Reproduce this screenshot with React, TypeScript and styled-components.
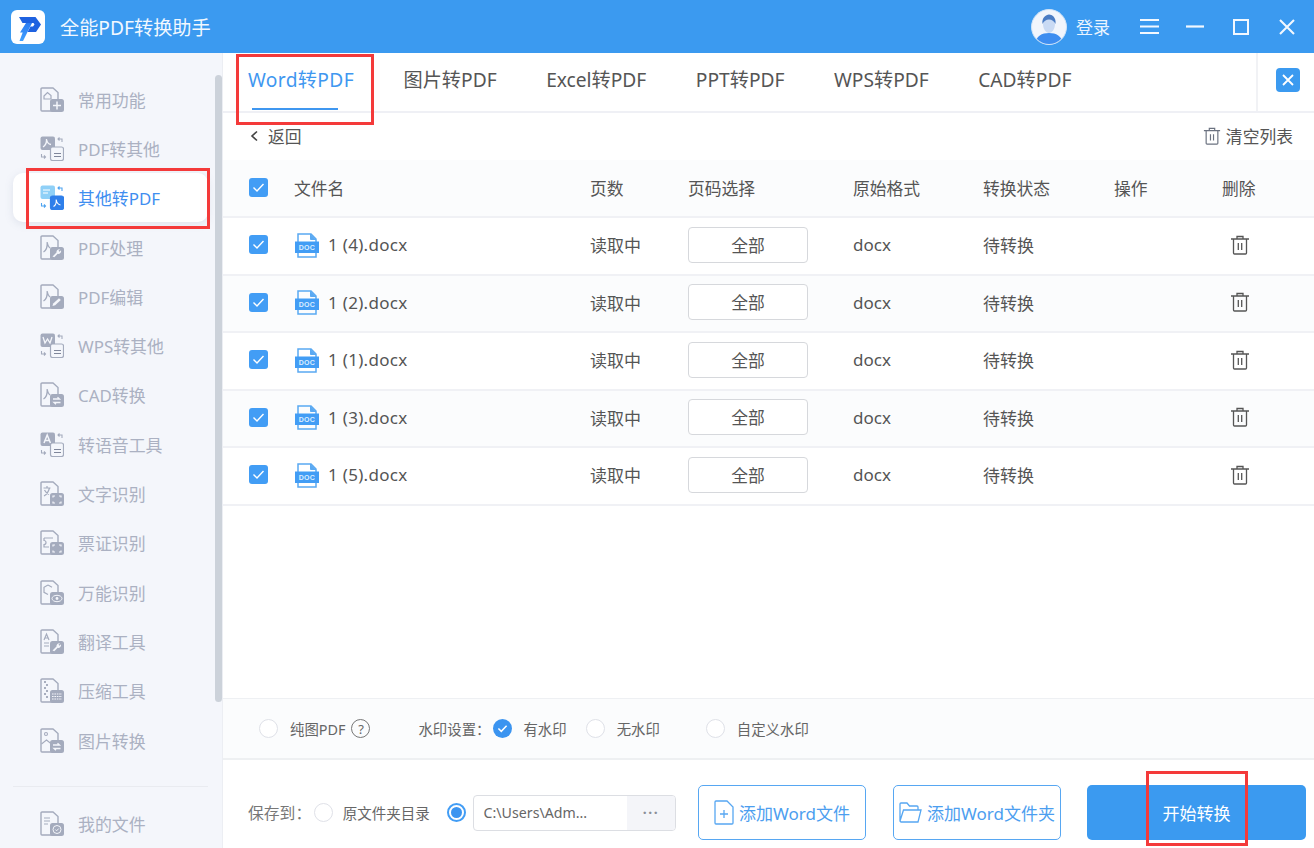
import React from "react";
import styled, { createGlobalStyle } from "styled-components";

const Global = createGlobalStyle`
  html, body { margin: 0; padding: 0; height: 100%; }
  body { font-family: "Noto Sans", "Noto Sans CJK SC", "Liberation Sans", sans-serif; color: #555; overflow: hidden; }
  * { box-sizing: border-box; }
`;

const Shell = styled.div`position: relative; width: 1314px; height: 848px; display: flex; flex-direction: column; overflow: hidden; background: #fff;`;
const Header = styled.header`height: 53px; flex: none; background: #3b9af0; display: flex; align-items: center; padding-left: 11px; color: #fff;`;
const Logo = styled.div`width: 34px; height: 34px; border-radius: 6px; background: #fff; display: flex;`;
const Title = styled.div`margin-left: 15px; font-size: 19.2px; color: #f2f8ff; white-space: nowrap; flex: 1;`;
const Avatar = styled.div`width: 36px; height: 36px; border-radius: 50%; overflow: hidden; background: #f1f5fc; border: 1px solid #cfe3f8;`;
const Login = styled.div`margin-left: 9px; font-size: 17px; width: 35px; white-space: nowrap; color: #eaf4ff;`;
const WinBtn = styled.div<{ $ml: number }>`margin-left: ${p => p.$ml}px; display: flex; align-items: center;`;
const Body = styled.div`flex: 1; min-height: 0; display: flex;`;

const Side = styled.aside`position: relative; width: 223px; flex: none; background: #f4f6fb; border-right: 1px solid #eceef3; padding-top: 21.5px; display: flex; flex-direction: column;`;
const SideItem = styled.div<{ $active?: boolean }>`
  height: 49.3px; flex: none; margin: 0 14px 0 13px; padding-left: 27px; display: flex; align-items: center; gap: 14px;
  font-size: 16.9px; white-space: nowrap; color: ${p => (p.$active ? "#3f8ef0" : "#abb1c2")};
  background: ${p => (p.$active ? "#fff" : "transparent")};
  border-radius: ${p => (p.$active ? "10px" : "0")};
  box-shadow: ${p => (p.$active ? "0 2px 8px rgba(120,130,160,.16)" : "none")};
`;
const SideRule = styled.div`height: 1px; margin: 21px 14px 12px 13px; background: #e9ebf0; flex: none;`;
const Thumb = styled.div`position: absolute; left: 215px; top: 22px; width: 7px; height: 627px; border-radius: 4px; background: #ccd2da;`;

const Main = styled.main`flex: 1; min-width: 0; display: flex; flex-direction: column;`;
const Tabs = styled.nav`height: 60px; flex: none; display: flex; border-bottom: 2px solid #eff0f5; padding-left: 25px;`;
const TabList = styled.div`flex: 1; display: flex; gap: 49.5px;`;
const Tab = styled.div<{ $active?: boolean }>`
  position: relative; height: 58px; line-height: 53px; font-size: 19.2px; white-space: nowrap;
  color: ${p => (p.$active ? "#3f97f0" : "#555")};
  ${p => p.$active ? `letter-spacing: .35px; &::after { content: ""; position: absolute; left: 4px; right: 16px; bottom: 1px; height: 2px; background: #3f97f0; }` : ""}
`;
const TabClose = styled.div`width: 58px; flex: none; border-left: 2px solid #f1f2f5; display: flex; align-items: center; justify-content: center; padding: 0 0 4px 4px;`;
const CloseBox = styled.div`width: 24px; height: 24px; border-radius: 4px; background: #3b9af0; display: flex; align-items: center; justify-content: center;`;
const BackRow = styled.div`height: 47px; flex: none; display: flex; align-items: center; justify-content: space-between; padding: 0 21px 1px 27px; font-size: 16.8px;`;
const RowLabel = styled.div`display: flex; align-items: center; white-space: nowrap; color: #555;`;

const Grid = "grid-template-columns: 45px 296px 98px 165px 130px 131px 108px 35px;";
const HeadRow = styled.div`
  height: 58px; flex: none; display: grid; ${Grid} align-items: center; padding: 0 0 1px 26px;
  background: #fbfcfd; border-bottom: 2px solid #f0f1f5; font-size: 16.8px; color: #555; white-space: nowrap;
`;
const Row = styled.div<{ $tint?: boolean }>`
  height: 57.5px; flex: none; display: grid; ${Grid} align-items: center; padding: 0 0 2px 26px;
  background: ${p => (p.$tint ? "#fbfcfd" : "#fff")}; border-bottom: 2px solid #f0f1f5; font-size: 17px; color: #555; white-space: nowrap;
  &:first-of-type { height: 56px; }
`;
const Check = styled.div`width: 19px; height: 19px; border-radius: 3px; background: #429df5; display: flex; align-items: center; justify-content: center;`;
const FileCell = styled.div`display: flex; align-items: center; gap: 8px; color: #555; letter-spacing: .3px;`;
const PageBtn = styled.div`width: 120px; height: 36px; border: 1px solid #d6d8dc; border-radius: 4px; background: #fff; display: flex; align-items: center; justify-content: center; font-size: 16.8px;`;
const DelCell = styled.div`display: flex; justify-content: center;`;
const Spacer = styled.div`flex: 1;`;

const Options = styled.div`height: 62px; flex: none; background: #fbfcfd; border-top: 1px solid #eef0f3; border-bottom: 2px solid #eef0f2; display: flex; align-items: center; padding: 0 0 0 36px; font-size: 14.4px; color: #666; white-space: nowrap;`;
const Radio = styled.span<{ $ml?: number; $on?: boolean }>`
  width: 19px; height: 19px; flex: none; border-radius: 50%; margin-left: ${p => p.$ml ?? 0}px;
  border: ${p => (p.$on ? "2px solid #429df5" : "1.5px solid #dfe1e8")}; background: #fff;
  display: flex; align-items: center; justify-content: center;
`;
const RadioDot = styled.span`width: 11px; height: 11px; border-radius: 50%; background: #3b94f0;`;
const CheckedRadio = styled.span`width: 19px; height: 19px; flex: none; border-radius: 50%; margin-left: 3px; background: #3b94f0; display: flex; align-items: center; justify-content: center;`;
const OptText = styled.span<{ $ml?: number }>`margin-left: ${p => p.$ml ?? 0}px;`;
const Help = styled.span`width: 19px; height: 19px; flex: none; margin-left: 6px; border: 1.5px solid #777; border-radius: 50%; display: flex; align-items: center; justify-content: center; font-size: 13px; color: #666;`;

const Footer = styled.div`height: 88px; flex: none; display: flex; align-items: center; padding: 17px 8px 0 25px; white-space: nowrap;`;
const SaveLabel = styled.span`font-size: 15.8px; color: #777; width: 66px;`;
const FooterText = styled.span`margin-left: 10px; font-size: 14.5px; color: #666; width: 88px;`;
const PathBox = styled.div`margin-left: 7px; width: 204px; height: 36px; border: 1px solid #dcdee3; border-radius: 4px; display: flex; overflow: hidden; font-size: 14.2px; color: #666;`;
const PathValue = styled.div`flex: 1; padding-left: 10px; line-height: 34px;`;
const PathMore = styled.div`width: 48px; background: #f4f5f9; color: #8b8f98; text-align: center; line-height: 34px; letter-spacing: 1.5px; font-size: 14px; font-weight: 700;`;
const AddBtn = styled.div<{ $ml: number }>`margin-left: ${p => p.$ml}px; width: 168px; height: 55px; flex: none; border: 1.5px solid #57a7f2; border-radius: 5px; display: flex; align-items: center; justify-content: center; gap: 5px; color: #4c9eef; font-size: 17px; background: #fff;`;
const StartBtn = styled.div`margin-left: 26px; width: 219px; height: 55px; flex: none; border-radius: 5px; background: #3b9af0; color: #fff; display: flex; align-items: center; justify-content: center; font-size: 17px;`;
const Mark = styled.div<{ $l: number; $t: number; $w: number; $h: number }>`
  position: absolute; left: ${p => p.$l}px; top: ${p => p.$t}px; width: ${p => p.$w}px; height: ${p => p.$h}px;
  border: 3px solid #f43a3a; pointer-events: none;
`;

const G = "#a4abbd";
const BG = "#f4f6fb";

const badgeExtras: Record<string, React.ReactNode> = {
  grid: <path d="M13 18.500h8M17 14.500v8" stroke={BG} strokeWidth="1.500" />,
  wrench: <path d="M12.500 21.500l4-4a2.800 2.800 0 0 1 3.500-3.200l-1.500 1.500 1 1 1.500-1.500a2.800 2.800 0 0 1-3.300 3.500l-3.400 3.400z" fill={BG} />,
  pen: <path d="M12.500 22l.7-2.600 5.800-5.200 1.800 1.900-5.600 5.200z" fill={BG} />,
  swap: <path d="M13 17h6.500l-2-1.800M20.500 20.500H14l2 1.800" stroke={BG} strokeWidth="1.300" fill="none" />,
  scan: <path d="M13 16.500V15h2M19 15h2v1.500M21 20.500V22h-2M15 22h-2v-1.500" stroke={BG} strokeWidth="1.200" fill="none" />,
  eye: <g><ellipse cx="17" cy="18.500" rx="5" ry="3.200" fill="none" stroke={BG} strokeWidth="1" /><circle cx="17" cy="18.500" r="1.400" fill={BG} /></g>,
  check: <g><circle cx="17" cy="18.500" r="4" fill="none" stroke={BG} strokeWidth="1" /><path d="M15.300 18.500l1.300 1.300 2.200-2.300" fill="none" stroke={BG} strokeWidth="1" /></g>,
  zip: <path d="M12 16h10M12 18.500h10M12 21h10" stroke={BG} strokeWidth="1.100" strokeDasharray="1.600 .8" />,
};

const DocIcon = ({ extra, inner }: { extra: string; inner?: React.ReactNode }) => (
  <svg width="24" height="25" viewBox="0 0 24 25">
    <path d="M2 1h11l5 4.500V23a1 1 0 0 1-1 1H2a1 1 0 0 1-1-1V2a1 1 0 0 1 1-1z" fill="none" stroke={G} strokeWidth="1.400" />
    {inner}
    <rect x="10" y="12" width="14" height="13" rx="2.500" fill={G} />
    {badgeExtras[extra]}
  </svg>
);

const SwapIcon = ({ active, top }: { active?: boolean; top: React.ReactNode }) => {
  const a = active ? "#8fd0f7" : G;
  const b = active ? "#2f7fea" : G;
  return (
    <svg width="24" height="25" viewBox="0 0 24 25">
      <rect x="0.500" y="0.500" width="14.500" height="13.500" rx="2" fill={a} />
      {top}
      <rect x="10.500" y="11" width="13" height="13.500" rx="2" fill={active ? b : BG} stroke={b} strokeWidth="1.200" />
      <path d="M18 3h4v3M19.500 1.500L18 3l1.500 1.500M1.500 18v3h4M4 19.500L5.500 21 4 22.500" fill="none" stroke={active ? "#4fa4f0" : G} strokeWidth="1.100" />
      {active
        ? <path d="M13.500 21.500c2-1 3-3.500 2.700-7 .4 2.900 1.600 4.900 4.300 5.500" fill="none" stroke="#fff" strokeWidth="1.100" />
        : <path d="M14 17.500h7M14 20.500h7" stroke="#7f869a" strokeWidth="1.100" />}
    </svg>
  );
};

const pdfMark = <path d="M3 11c2.500-1.500 3.800-4.500 3.500-8 .4 3 1.800 5 4.500 5.500" fill="none" stroke={BG} strokeWidth="1.300" />;
const pdfLine = <path d="M3.500 17c2.500-1.500 4-5 3.700-10 .4 3 1.300 5 3 6" fill="none" stroke={G} strokeWidth="1.300" />;

const sideIcons: [string, React.ReactNode, boolean?][] = [
  ["常用功能", <DocIcon extra="grid" inner={<path d="M4 9l3.500-3.500L11 8.500V12H4z" fill="none" stroke={G} strokeWidth="1.200" />} />],
  ["PDF转其他", <SwapIcon top={pdfMark} />],
  ["其他转PDF", <SwapIcon active top={<path d="M3 5h7M3 8h5" stroke="#fff" strokeWidth="1" />} />, true],
  ["PDF处理", <DocIcon extra="wrench" inner={pdfLine} />],
  ["PDF编辑", <DocIcon extra="pen" inner={pdfLine} />],
  ["WPS转其他", <SwapIcon top={<path d="M3 4l2 6 2.500-4 2.500 4 2-6" fill="none" stroke={BG} strokeWidth="1.300" />} />],
  ["CAD转换", <DocIcon extra="swap" inner={pdfLine} />],
  ["转语音工具", <SwapIcon top={<path d="M4 11l3.200-8 3.200 8M5.200 8.500h4" fill="none" stroke={BG} strokeWidth="1.500" />} />],
  ["文字识别", <DocIcon extra="scan" inner={<path d="M3.500 7h7M7 5v2M4 15c3-1.500 4.500-4.500 5.500-8M4.500 9c1 2 2.500 3.500 4.500 4.500" fill="none" stroke={G} strokeWidth="1.200" />} />],
  ["票证识别", <DocIcon extra="scan" inner={<path d="M4 8h9M4 8v2.500a2 2 0 0 1 0 4V17h5" fill="none" stroke={G} strokeWidth="1.200" />} />],
  ["万能识别", <DocIcon extra="eye" inner={<path d="M8 5l4 2.200M8 5L4 7.300v5l4 2.200" fill="none" stroke={G} strokeWidth="1.200" />} />],
  ["翻译工具", <DocIcon extra="wrench" inner={<path d="M4 11l2.500-6L9 11M4.800 9h3.500M4 14h5M4 17h5" fill="none" stroke={G} strokeWidth="1.200" />} />],
  ["压缩工具", <DocIcon extra="zip" inner={<path d="M4 4h2M6 7h2M4 10h2M6 13h2M4 16h2M6 19h2" stroke="#8f96aa" strokeWidth="1.700" />} />],
  ["图片转换", <DocIcon extra="swap" inner={<g><circle cx="6" cy="6" r="1.500" fill="none" stroke={G} strokeWidth="1.100" /><path d="M1.500 16l5-4 5 4" fill="none" stroke={G} strokeWidth="1.100" /></g>} />],
];

const Tick = () => (
  <svg width="13" height="11" viewBox="0 0 13 11"><path d="M1.500 5.500l3.500 3.500 6.500-7" fill="none" stroke="#fff" strokeWidth="1.400" /></svg>
);

const DocxIcon = () => (
  <svg width="26" height="26" viewBox="0 0 26 26">
    <path d="M4 11V2h13l5 5v4M4 20v5h18v-5" fill="none" stroke="#5aa9f2" strokeWidth="1.500" />
    <path d="M16.500 2v5.500H22" fill="#5aa9f2" stroke="#5aa9f2" strokeWidth="1" />
    <rect x="1" y="9.500" width="24" height="11.500" fill="#429df5" />
    <text x="13" y="18" textAnchor="middle" fontSize="7" fontWeight="700" fill="#d9ecff" fontFamily="Liberation Sans, sans-serif">DOC</text>
  </svg>
);

const Trash = ({ size = 20, color = "#555" }: { size?: number; color?: string }) => (
  <svg width={size} height={size} viewBox="0 0 20 20">
    <path d="M1 4h18M7 4V1.500h6V4M3.500 4v14a1 1 0 0 0 1 1h11a1 1 0 0 0 1-1V4M8.300 8v7M11.700 8v7" fill="none" stroke={color} strokeWidth="1.300" />
  </svg>
);

const files = ["1 (4).docx", "1 (2).docx", "1 (1).docx", "1 (3).docx", "1 (5).docx"];
const tabs = ["Word转PDF", "图片转PDF", "Excel转PDF", "PPT转PDF", "WPS转PDF", "CAD转PDF"];

export default function App() {
  return (
    <Shell>
      <Global />
      <Header>
        <Logo>
          <svg width="34" height="34" viewBox="0 0 34 34">
            <defs><linearGradient id="lg" x1="0" y1="0" x2="0" y2="1"><stop offset="0" stopColor="#2c7cf2" /><stop offset="1" stopColor="#3fa0ff" /></linearGradient></defs>
            <path d="M8 7h16.500l5.500 7.500-5 7.500h-8.500l3-5.500h2.500l1.500-2-1-1.500H11.500z" fill="#1f62e0" />
            <path d="M15 13h6L12 31H8.500l3.200-8.500H9z" fill="url(#lg)" />
          </svg>
        </Logo>
        <Title>全能PDF转换助手</Title>
        <Avatar>
          <svg width="34" height="34" viewBox="0 0 34 34">
            <path d="M11 14c0-5 3-7 6-7s6 2 6 7c0 5-3 9-6 9s-6-4-6-9z" fill="#c9daf4" />
            <path d="M10.500 14c-1-6 3.500-9.500 6.500-9.500s7.500 3 6.500 9.500c-1.500-3-3.500-4.500-6.500-4.500s-5 1.500-6.500 4.500z" fill="#4a7cc4" />
            <path d="M3 34c1-8 7-11 14-11s13 3 14 11z" fill="#3d8df0" />
          </svg>
        </Avatar>
        <Login>登录</Login>
        <WinBtn $ml={29}><svg width="19" height="17" viewBox="0 0 19 17"><path d="M0 2h19M0 8.500h19M0 15h19" stroke="#f2f8ff" strokeWidth="2.200" /></svg></WinBtn>
        <WinBtn $ml={27}><svg width="18" height="3" viewBox="0 0 18 3"><path d="M0 1.500h18" stroke="#f2f8ff" strokeWidth="2.200" /></svg></WinBtn>
        <WinBtn $ml={29}><svg width="16" height="16" viewBox="0 0 16 16"><rect x="1" y="1" width="14" height="14" fill="none" stroke="#f2f8ff" strokeWidth="2" /></svg></WinBtn>
        <WinBtn $ml={30}><svg width="16" height="16" viewBox="0 0 16 16"><path d="M1 1l14 14M15 1L1 15" stroke="#f2f8ff" strokeWidth="2.100" /></svg></WinBtn>
        <WinBtn $ml={19} />
      </Header>
      <Body>
        <Side>
          {sideIcons.map(([label, icon, active]) => (
            <SideItem key={label} $active={active}>{icon}<span>{label}</span></SideItem>
          ))}
          <SideRule />
          <SideItem>
            <DocIcon extra="check" inner={<path d="M4 7h6M4 10h6M4 13h4" stroke={G} strokeWidth="1.200" />} />
            <span>我的文件</span>
          </SideItem>
          <Thumb />
        </Side>
        <Main>
          <Tabs>
            <TabList>
              {tabs.map((t, i) => <Tab key={t} $active={i === 0}>{t}</Tab>)}
            </TabList>
            <TabClose>
              <CloseBox>
                <svg width="12" height="12" viewBox="0 0 12 12"><path d="M1 1l10 10M11 1L1 11" stroke="#fff" strokeWidth="1.800" /></svg>
              </CloseBox>
            </TabClose>
          </Tabs>
          <BackRow>
            <RowLabel>
              <svg width="9" height="12" viewBox="0 0 9 12"><path d="M7 1.500L2 6l5 4.500" fill="none" stroke="#444" strokeWidth="1.600" /></svg>
              <OptText $ml={9}>返回</OptText>
            </RowLabel>
            <RowLabel>
              <Trash size={18} color="#6b7280" />
              <OptText $ml={5}>清空列表</OptText>
            </RowLabel>
          </BackRow>
          <HeadRow>
            <Check><Tick /></Check>
            <span>文件名</span><span>页数</span><span>页码选择</span><span>原始格式</span><span>转换状态</span><span>操作</span><span>删除</span>
          </HeadRow>
          {files.map((f, i) => (
            <Row key={f} $tint={i % 2 === 1}>
              <Check><Tick /></Check>
              <FileCell><DocxIcon /><span>{f}</span></FileCell>
              <span>读取中</span>
              <PageBtn>全部</PageBtn>
              <span>docx</span>
              <span>待转换</span>
              <span />
              <DelCell><Trash /></DelCell>
            </Row>
          ))}
          <Spacer />
          <Options>
            <Radio />
            <OptText $ml={12}>纯图PDF</OptText>
            <Help>?</Help>
            <OptText $ml={48}>水印设置：</OptText>
            <CheckedRadio><svg width="11" height="9" viewBox="0 0 13 11"><path d="M1.500 5.500l3.500 3.500 6.500-7" fill="none" stroke="#fff" strokeWidth="1.800" /></svg></CheckedRadio>
            <OptText $ml={11}>有水印</OptText>
            <Radio $ml={19} />
            <OptText $ml={12}>无水印</OptText>
            <Radio $ml={46} />
            <OptText $ml={12}>自定义水印</OptText>
          </Options>
          <Footer>
            <SaveLabel>保存到：</SaveLabel>
            <Radio />
            <FooterText>原文件夹目录</FooterText>
            <Radio $ml={16} $on><RadioDot /></Radio>
            <PathBox><PathValue>C:\Users\Adm...</PathValue><PathMore>···</PathMore></PathBox>
            <AddBtn $ml={22}>
              <svg width="20" height="25" viewBox="0 0 20 25"><path d="M2 1h11l6 6v16a1 1 0 0 1-1 1H2a1 1 0 0 1-1-1V2a1 1 0 0 1 1-1zM10 10v8M6 14h8" fill="none" stroke="#57a7f2" strokeWidth="1.300" /></svg>
              <span>添加Word文件</span>
            </AddBtn>
            <AddBtn $ml={27}>
              <svg width="23" height="23" viewBox="0 0 23 23"><path d="M1 20V3a1 1 0 0 1 1-1h6l2.500 3H18a1 1 0 0 1 1 1v3M1 20l3.500-11H22l-3 12H2z" fill="none" stroke="#57a7f2" strokeWidth="1.300" /></svg>
              <span>添加Word文件夹</span>
            </AddBtn>
            <StartBtn>开始转换</StartBtn>
          </Footer>
        </Main>
      </Body>
      <Mark $l={236} $t={54} $w={138} $h={71} />
      <Mark $l={26} $t={168} $w={184} $h={61} />
      <Mark $l={1146} $t={771} $w={102} $h={75} />
    </Shell>
  );
}
